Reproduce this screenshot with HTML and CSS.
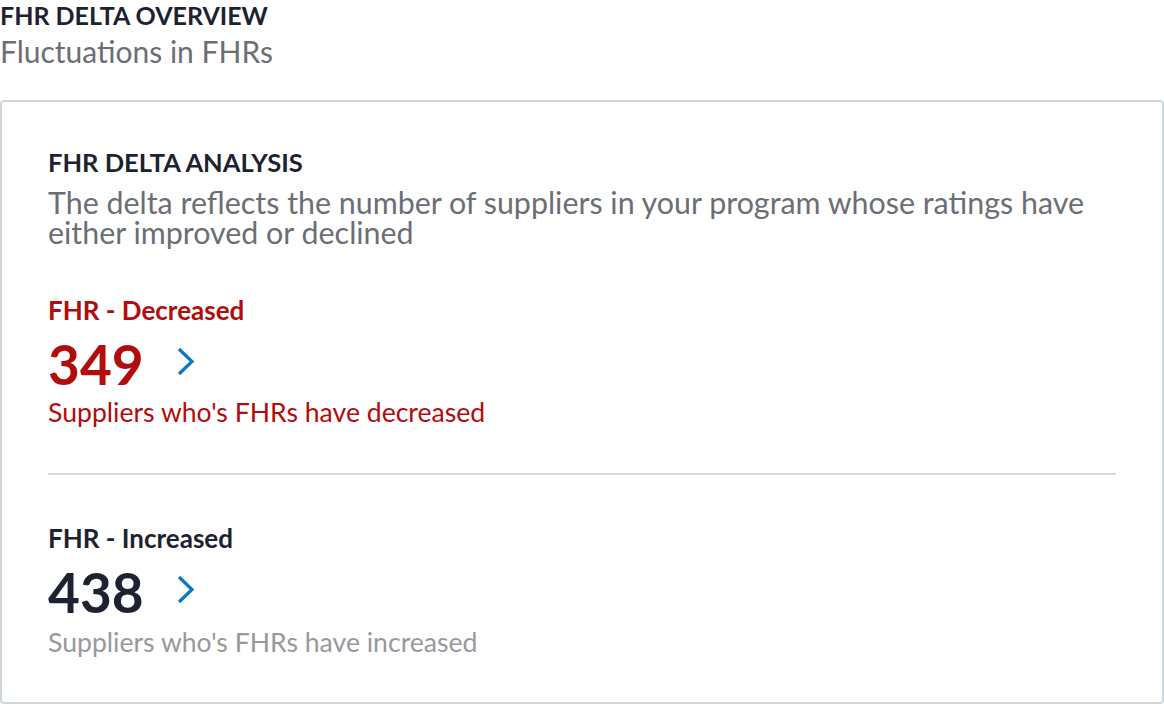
FILE: index.html
```html
<!DOCTYPE html>
<html>
<head>
<meta charset="utf-8">
<link rel="stylesheet" href="styles.css">
</head>
<body>
<div class="page">
  <div class="header">
    <div class="title">FHR DELTA OVERVIEW</div>
    <div class="subtitle">Fluctuations in FHRs</div>
  </div>
  <div class="card">
    <div class="card-title">FHR DELTA ANALYSIS</div>
    <div class="card-desc">The delta reflects the number of suppliers in your program whose ratings have either improved or declined</div>
    <div class="metric decreased">
      <div class="metric-label">FHR - Decreased</div>
      <div class="metric-row">
        <span class="metric-value">349</span>
        <svg class="chev" width="18" height="30" viewBox="0 0 18 30"><path d="M2 2 L15 14.5 L2 27" fill="none" stroke="#0b78c4" stroke-width="3.2"/></svg>
      </div>
      <div class="metric-sub">Suppliers who's FHRs have decreased</div>
    </div>
    <div class="divider"></div>
    <div class="metric increased">
      <div class="metric-label">FHR - Increased</div>
      <div class="metric-row">
        <span class="metric-value">438</span>
        <svg class="chev" width="18" height="30" viewBox="0 0 18 30"><path d="M2 2 L15 14.5 L2 27" fill="none" stroke="#0b78c4" stroke-width="3.2"/></svg>
      </div>
      <div class="metric-sub">Suppliers who's FHRs have increased</div>
    </div>
  </div>
</div>
</body>
</html>
```

FILE: styles.css
```css
html, body {
  margin: 0;
  padding: 0;
  background: #ffffff;
}
body {
  font-family: Lato, "Noto Sans", sans-serif;
  color: #1d2230;
}
.page {
  width: 1164px;
  height: 704px;
  display: flex;
  flex-direction: column;
  overflow: hidden;
}
.header {
  height: 100px;
  flex: none;
  box-sizing: border-box;
}
.title {
  font-size: 25px;
  font-weight: 700;
  line-height: 30px;
  color: #1d2230;
}
.subtitle {
  font-size: 30px;
  line-height: 36px;
  margin-top: 3px;
  color: #6b6e75;
}
.card {
  flex: 1;
  border: 2px solid #cfd7df;
  border-radius: 4px;
  padding: 45px 46px 0 46px;
  box-sizing: border-box;
  display: flex;
  flex-direction: column;
}
.card-title {
  font-size: 25.5px;
  font-weight: 700;
  line-height: 30px;
  color: #1d2230;
}
.card-desc {
  font-size: 30.4px;
  line-height: 30px;
  color: #6b6e75;
  margin-top: 10px;
}
.metric {
  display: flex;
  flex-direction: column;
}
.decreased {
  margin-top: 48px;
}
.increased {
  margin-top: 48px;
}
.metric-label {
  font-size: 26px;
  font-weight: 700;
  line-height: 30px;
}
.metric-row {
  display: flex;
  align-items: flex-start;
  gap: 33px;
  height: 60px;
  margin-top: 9px;
}
.metric-value {
  font-size: 55px;
  font-weight: 700;
  line-height: 60px;
}
.chev {
  display: block;
  margin-top: 13px;
}
.metric-sub {
  font-size: 26.6px;
  line-height: 32px;
}
.decreased .metric-sub {
  margin-top: 2px;
}
.increased .metric-sub {
  margin-top: 4px;
}
.decreased .metric-label,
.decreased .metric-value,
.decreased .metric-sub {
  color: #b30c0c;
}
.increased .metric-label,
.increased .metric-value {
  color: #1d2230;
}
.increased .metric-sub {
  color: #97999e;
}
.divider {
  height: 2px;
  background: #d2d9e0;
  margin-top: 45px;
  flex: none;
}
```
